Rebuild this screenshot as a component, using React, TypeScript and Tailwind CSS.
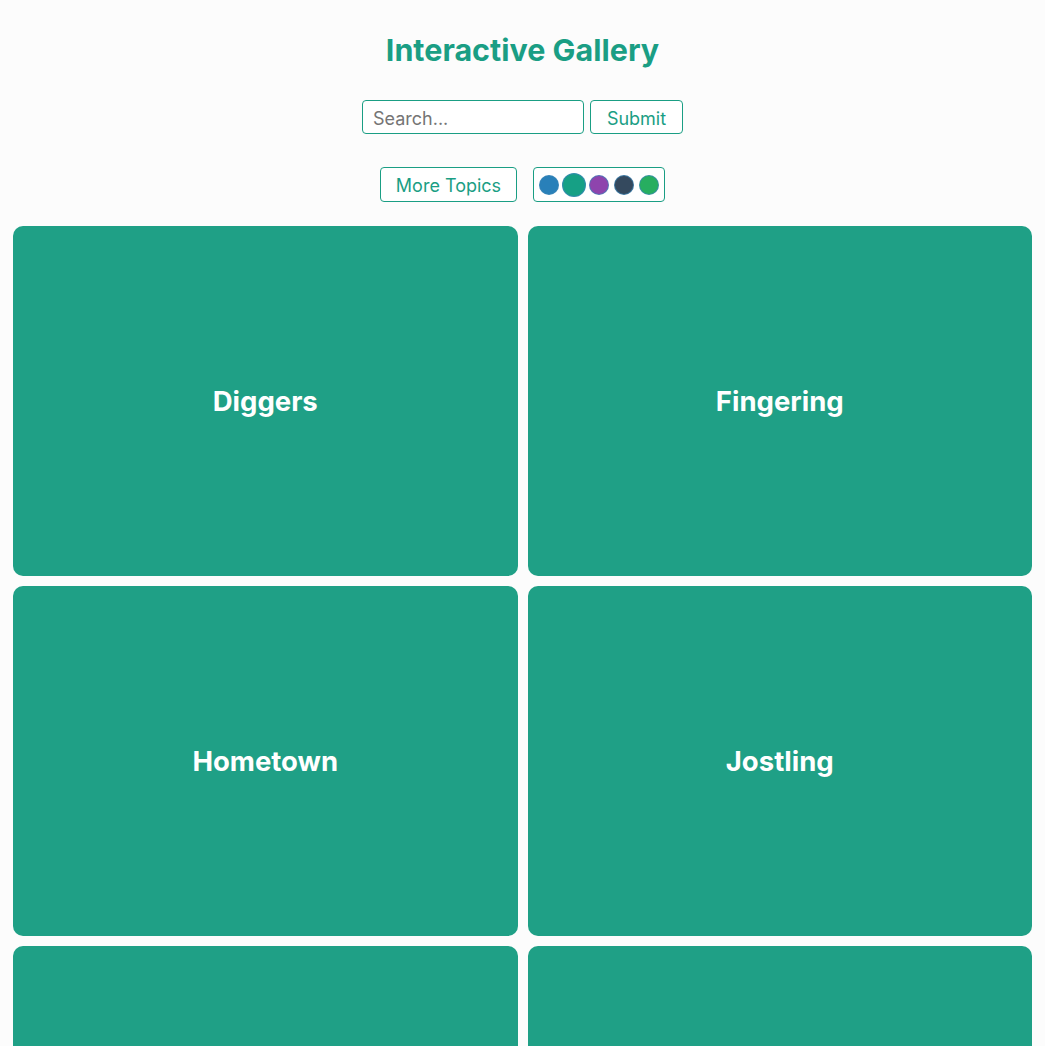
import React, { useState } from 'react';

const TOPICS = ['Diggers', 'Fingering', 'Hometown', 'Jostling', 'Keepsake', 'Lanterns'];

const SWATCHES = ['#2980b9', '#16a085', '#8e44ad', '#34495e', '#27ae60'];

const App: React.FC = () => {
  const [active, setActive] = useState(1);
  const [query, setQuery] = useState('');

  return (
    <div className="min-h-screen bg-[#fcfcfc] px-[13px] pt-[32px] font-['Inter',sans-serif]">
      {/* Header */}
      <h1 className="text-center text-[30.5px] leading-[36px] font-bold text-[#1a9e84]">Interactive Gallery</h1>

      {/* Search */}
      <form className="mt-[32px] flex justify-center gap-[6px]" onSubmit={e => e.preventDefault()}>
        <input
          value={query}
          onChange={e => setQuery(e.target.value)}
          placeholder="Search..."
          className="h-[34px] w-[222px] rounded-[4px] border border-[#1a9e84] bg-white px-[10px] pt-[2px] text-[18px] text-gray-700 placeholder:text-[#757575] outline-none"
        />
        <button type="submit" className="h-[34px] w-[93px] rounded-[4px] border border-[#1a9e84] bg-white pt-[2px] text-[18px] text-[#1a9e84]">
          Submit
        </button>
      </form>

      {/* Controls */}
      <div className="mt-[33px] flex justify-center gap-[16px]">
        <button className="h-[35px] w-[137px] rounded-[4px] border border-[#1a9e84] bg-white pt-[2px] text-[18px] text-[#1a9e84]">
          More Topics
        </button>
        <div className="flex h-[35px] items-center gap-[5px] rounded-[4px] border border-[#1a9e84] bg-white px-[5px]">
          {SWATCHES.map((c, i) => (
            <button
              key={c}
              onClick={() => setActive(i)}
              className={`h-[20px] w-[20px] rounded-full border border-[#3a86b8]/70 ${i === active ? 'scale-[1.2]' : ''}`}
              style={{ backgroundColor: c }}
            />
          ))}
        </div>
      </div>

      {/* Gallery */}
      <div className="mt-[24px] grid grid-cols-2 gap-[10px]">
        {TOPICS.map(t => (
          <div key={t} className="flex h-[350px] items-center justify-center rounded-[10px] bg-[#1fa086] pt-[2px]">
            <span className="text-[27.5px] font-bold text-white">{t}</span>
          </div>
        ))}
      </div>
    </div>
  );
};

export default App;
